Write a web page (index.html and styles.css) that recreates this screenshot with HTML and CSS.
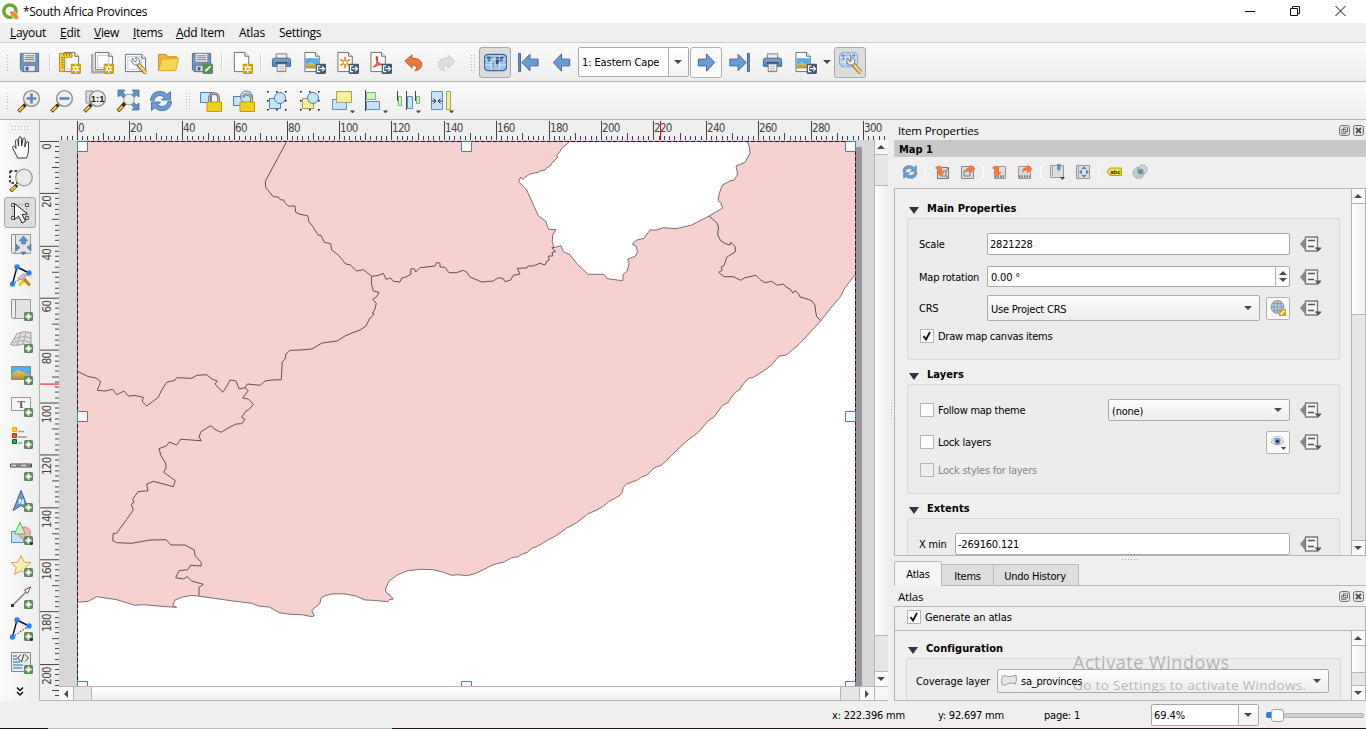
FILE: index.html
```html
<!DOCTYPE html>
<html lang="en">
<head>
<meta charset="utf-8">
<title>*South Africa Provinces</title>
<link rel="stylesheet" href="styles.css">
</head>
<body>
<svg class="defs" width="0" height="0">
  <defs>
    <linearGradient id="blue" x1="0" y1="0" x2="0" y2="1"><stop offset="0" stop-color="#7da5d3"/><stop offset="1" stop-color="#5080b8"/></linearGradient>
    <linearGradient id="sand" x1="0" y1="0" x2="0" y2="1"><stop offset="0" stop-color="#e0cf70"/><stop offset="1" stop-color="#b3912a"/></linearGradient>
  </defs>
  <symbol id="b-plus" viewBox="0 0 9 9"><rect width="9" height="9" rx="1.5" fill="#5a8c5a"/><path d="M4.5 1.5v6M1.5 4.5h6" stroke="#fff" stroke-width="2"/></symbol>
  <symbol id="b-new" viewBox="0 0 11 11"><rect width="11" height="11" rx="1.5" fill="#c7a200"/><path d="M5.5 1v9M1.600 3.200l7.800 4.600M9.400 3.200l-7.800 4.600" stroke="#fff" stroke-width="1.300"/><circle cx="5.500" cy="5.500" r="2.600" fill="#fff"/><circle cx="5.500" cy="5.500" r="1.200" fill="#c7a200"/></symbol>
  <symbol id="b-exp" viewBox="0 0 11 11"><rect width="11" height="11" rx="1.500" fill="#415a70"/><path d="M5 2.500H2.200v6H5M4 5.500h5M7 3l2.500 2.500L7 8" fill="none" stroke="#fff" stroke-width="1.300"/></symbol>
  <symbol id="paper" viewBox="0 0 24 24"><path d="M4.500 1.500h11l4 4v16h-15z" fill="#fff" stroke="#6e6e6e"/><path d="M15.500 1.500v4h4" fill="#eee" stroke="#6e6e6e"/></symbol>
  <symbol id="save" viewBox="0 0 24 24"><path d="M2.500 2.500h19v19h-17l-2-2z" fill="#6b96c8" stroke="#4a6e9c"/><path d="M5.500 2.500h13v9h-13z" fill="#f1f1f1" stroke="#777" stroke-width=".7"/><path d="M7 5h10M7 7h10M7 9h10" stroke="#777"/><path d="M6 15h12v6.500H6z" fill="#e4e4e4" stroke="#555" stroke-width=".7"/><path d="M8 16.500h3v4H8z" fill="#3f6490"/></symbol>
  <symbol id="saveas" viewBox="0 0 24 24"><use href="#save"/><rect x="13" y="13" width="11" height="11" rx="1.500" fill="#5a8c5a"/><path d="M15.500 21.500l.5-2 5-4 1 1-4.500 4.500z" fill="#fff"/></symbol>
  <symbol id="newlay" viewBox="0 0 24 24"><use href="#paper" x="2"/><path d="M8.500 6v13h9M8 4.500h8" fill="none" stroke="#b6c9f0"/><path d="M1.500 2.500h13v4h-8v15h-5z" fill="#fbd43c" stroke="#b98b00"/><path d="M3.500 7h2M3.500 9.500h2M3.500 12h2M3.500 14.500h2M3.500 17h2M6 3v2M9 3v2M12 3v2" stroke="#86620a"/><use href="#b-new" x="13" y="13" width="11" height="11"/></symbol>
  <symbol id="duplay" viewBox="0 0 24 24"><path d="M1 3v19h15" fill="none" stroke="#aaa" stroke-width="3"/><path d="M4.500 1.500h14l4 4v14h-18z" fill="#fff" stroke="#6e6e6e"/><path d="M7 4.500h11v13H7z" fill="none" stroke="#b6c9f0"/><path d="M18.500 1.500v4h4" fill="#eee" stroke="#6e6e6e"/><use href="#b-new" x="13" y="13" width="11" height="11"/></symbol>
  <symbol id="wrench" viewBox="0 0 24 24"><path d="M13 11l9 10" stroke="#806a38" stroke-width="4.500" stroke-linecap="round"/><path d="M15 13l6.800 7.500" stroke="#f7d57a" stroke-width="2.600" stroke-linecap="round"/><path d="M8 5.500a4.500 4.500 0 0 0 5 7l2-1.500a4.500 4.500 0 0 0-4-6.500l1 3.500-1.500 1.500z" fill="#eee" stroke="#777"/></symbol>
  <symbol id="manage" viewBox="0 0 24 24"><path d="M1.500 3.500h17l4 4v14h-21z" fill="#fff" stroke="#6e6e6e"/><path d="M4 6h14v13H4z" fill="none" stroke="#b6c9f0"/><path d="M18.500 3.500v4h4" fill="#eee" stroke="#6e6e6e"/><use href="#wrench" x="1" y="2"/></symbol>
  <symbol id="folder" viewBox="0 0 24 24"><path d="M1.500 20.500v-17h8l2 2.500h9v3" fill="#e5b93c" stroke="#bd8f23"/><path d="M1.500 20.500L5 8.500l17.500-1-3 13z" fill="#fbd550" stroke="#d6a52c"/></symbol>
  <symbol id="newpage" viewBox="0 0 24 24"><use href="#paper" x="-1"/><use href="#b-new" x="12" y="13" width="11" height="11"/></symbol>
  <symbol id="print" viewBox="0 0 24 24"><path d="M6.500 3h11v6h-11z" fill="#eee" stroke="#777"/><path d="M2.500 10q0-2.500 2-2.500h15q2 0 2 2.500v6h-19z" fill="url(#blue)" stroke="#3e6292"/><path d="M6 11.500h12v2H6z" fill="#38516f"/><path d="M7.500 13.500h9v8h-9z" fill="#fff" stroke="#777"/><path d="M9 16h6M9 18h6M9 20h6" stroke="#999" stroke-width=".8"/></symbol>
  <symbol id="expimg" viewBox="0 0 24 24"><use href="#paper" x="-2.500"/><path d="M2.500 7.500h14V18h-14z" fill="#55aef0"/><path d="M2.500 15l5.500-3.500 4 2 4.500-1V18h-14z" fill="url(#sand)"/><use href="#b-exp" x="13" y="13" width="11" height="11"/></symbol>
  <symbol id="expsvg" viewBox="0 0 24 24"><use href="#paper" x="-2.500"/><path d="M9.500 6v12M4.500 8.800l10 6.400M14.500 8.800l-10 6.400" stroke="#f5871f" stroke-width="1.900"/><circle cx="9.500" cy="12" r="1.600" fill="#fff"/><use href="#b-exp" x="13" y="13" width="11" height="11"/></symbol>
  <symbol id="exppdf" viewBox="0 0 24 24"><use href="#paper" x="-2.500"/><path d="M4.500 17c4-2 5-8 4-11-1-1-1.500 2 0 5 2 3 4 3.500 6 3.500 1-1-5-1.500-10 2.500z" fill="none" stroke="#f03a32" stroke-width="1.300"/><use href="#b-exp" x="13" y="13" width="11" height="11"/></symbol>
  <symbol id="undo" viewBox="0 0 24 24"><path d="M3 10.500l7.500-6.500v4c7-1 10 2.500 10 6 0 3.500-3 6.500-7 6.500 2.500-2.500 2.500-6-3-6v3.500z" fill="#e8793d" stroke="#c35b22"/></symbol>
  <symbol id="redo" viewBox="0 0 24 24"><path d="M21 10.500l-7.500-6.500v4c-7-1-10 2.500-10 6 0 3.500 3 6.500 7 6.500-2.500-2.500-2.500-6 3-6v3.500z" fill="#dedede" stroke="#c9c9c9"/></symbol>
  <symbol id="atlas" viewBox="0 0 24 24"><rect x=".5" y="3.500" width="23" height="17" rx="4" fill="#9fc4ec" stroke="#3f6796" stroke-width="1.400"/><path d="M3 6h6l-1 3-3 2-2-3zM8.500 12.500l2 1-1 4zM12.500 6.500l8-.5-1 4-4 1.500-1.500 5-1.500-4z" fill="#2f557f"/><path d="M1 8.500h22M1 14.500h22M7.500 4v16M16 4v16" stroke="#e8f2ff" stroke-width=".7"/></symbol>
  <symbol id="first" viewBox="0 0 24 24"><path d="M1.700 2.500h2v19h-2z" fill="#6b96c8" stroke="#3e6292"/><path d="M5 12L13.500 3.500v5h8.500v7h-8.500v5z" fill="#6b9bd0" stroke="#3e6292"/></symbol>
  <symbol id="prev" viewBox="0 0 24 24"><path d="M3.500 12L12 3v5.500h8.500v7H12V21z" fill="#6b9bd0" stroke="#3e6292"/></symbol>
  <symbol id="next" viewBox="0 0 24 24"><path d="M20.500 12L12 3v5.500H3.500v7H12V21z" fill="#6b9bd0" stroke="#3e6292"/></symbol>
  <symbol id="last" viewBox="0 0 24 24"><path d="M20.300 2.500h2v19h-2z" fill="#6b96c8" stroke="#3e6292"/><path d="M19 12L10.500 3.500v5H2v7h8.500v5z" fill="#6b9bd0" stroke="#3e6292"/></symbol>
  <symbol id="atlasset" viewBox="0 0 24 24"><rect x=".5" y="1.500" width="19" height="15" rx="4" fill="#b5cdec" stroke="#8da7c9"/><path d="M3 4h5l-1 4-3 1zM11 4h6l-2 5-3 2zM7 10l3 1-2 4z" fill="#5f83b3"/><path d="M1 6.500h18M1 11.500h18M6.500 2v14M13 2v14" stroke="#edf4ff"/><use href="#wrench" x="1" y="2"/></symbol>
  <symbol id="lens" viewBox="0 0 24 24"><path d="M8.500 15.500L1.500 22.500" stroke="#3a2c07" stroke-width="3.600"/><path d="M6.500 17.500l-4.500 4.500" stroke="#f5bf3a" stroke-width="2.400"/><circle cx="14.500" cy="9.500" r="7.900" fill="#ededed" stroke="#8c8c8c" stroke-width="1.400"/></symbol>
  <symbol id="zin" viewBox="0 0 24 24"><use href="#lens"/><path d="M14.500 4.500v10M9.500 9.500h10" stroke="#5a87be" stroke-width="2.600"/></symbol>
  <symbol id="zout" viewBox="0 0 24 24"><use href="#lens"/><path d="M9.500 9.500h10" stroke="#5a87be" stroke-width="2.600"/></symbol>
  <symbol id="z11" viewBox="0 0 24 24"><path d="M3 2h7v12H3z" fill="#ddd" stroke="#888"/><use href="#lens"/></symbol>
  <symbol id="zfull" viewBox="0 0 24 24"><path d="M2 1h7L7 3.500l3 3L7.500 9l-3-3L2 8zM23 1h-7l2 2.500-3 3L17.500 9l3-3L23 8zM23 21h-7l2-2.500-3-3 2.500-2.500 3 3L23 14z" fill="#5e8fc8" stroke="#3e6292" stroke-width=".7"/><path d="M9.500 13.500L2 22" stroke="#3a2c07" stroke-width="3.600"/><path d="M6.500 17L2.500 21.500" stroke="#f5bf3a" stroke-width="2.400"/><circle cx="13" cy="10.500" r="5.300" fill="#eee" stroke="#999"/></symbol>
  <symbol id="refresh" viewBox="0 0 24 24"><path d="M1.500 11.500C2 5 6 2.500 11 2.500c3.500 0 5.500 1 7 3L21.500 2.500v8.500h-9l3-3C11 5.500 7 6 5 11.500z" fill="#6b9bd0" stroke="#4d7cb5"/><path d="M22.500 12.500C22 19 18 21.500 13 21.500c-3.500 0-5.500-1-7-3L2.500 21.500V13h9l-3 3c4.500 2.500 8.500 2 10.500-3.500z" fill="#6b9bd0" stroke="#4d7cb5"/></symbol>
  <symbol id="lock" viewBox="0 0 24 24"><path d="M1.500 3.500h11v10h-11z" fill="#c7e3f8" stroke="#4e7fb5"/><path d="M10.500 13V9a4.500 4.500 0 0 1 9 0V13" fill="none" stroke="#777" stroke-width="2.800"/><path d="M10.500 13V9a4.500 4.500 0 0 1 9 0V13" fill="none" stroke="#bbb" stroke-width="1"/><path d="M8 13h14.500v9.500H8z" fill="#f0d01f" stroke="#c09a00"/></symbol>
  <symbol id="unlock" viewBox="0 0 24 24"><path d="M1.500 7.500h11v9h-11z" fill="#c7e3f8" stroke="#4e7fb5"/><circle cx="14.500" cy="8" r="6" fill="#c7e3f8" stroke="#4e7fb5"/><path d="M11 8.500q1-3 4-3 4.500.5 4.500 5V13" fill="none" stroke="#777" stroke-width="2.600"/><path d="M11 8.500q1-3 4-3 4.500.5 4.500 5V13" fill="none" stroke="#ccc" stroke-width="1"/><path d="M8 13h14.500v9.500H8z" fill="#f0d01f" stroke="#c09a00"/></symbol>
  <symbol id="dots" viewBox="0 0 24 24"><path d="M2 2h1.600v1.600H2zM11 2h1.600v1.600h-1.600zM20 2h1.600v1.600h-1.600zM2 20h1.600v1.600H2zM11 20h1.600v1.600h-1.600zM20 20h1.600v1.600h-1.600zM20 11h1.600v1.600h-1.600zM2 11h1.600v1.600H2z" fill="#111"/></symbol>
  <symbol id="group" viewBox="0 0 24 24"><path d="M4.500 9.500h11v10h-11z" fill="#c7e3f8" stroke="#4e7fb5"/><circle cx="15" cy="9" r="5.500" fill="#c7e3f8" stroke="#4e7fb5"/><use href="#dots"/></symbol>
  <symbol id="ungroup" viewBox="0 0 24 24"><path d="M4.500 9.500h11v10h-11z" fill="#f3ee9c" stroke="#a09a4c"/><circle cx="15" cy="9" r="5.500" fill="#c7e3f8" stroke="#4e7fb5"/><use href="#dots"/></symbol>
  <symbol id="raise" viewBox="0 0 24 24"><path d="M1.500 10.500h14v10h-14z" fill="#c7e3f8" stroke="#5a8fc4"/><path d="M5.500 2.500h15v11h-15z" fill="#f3ee9c" stroke="#a7a256"/><path d="M19 21.500h5l-2.500 3z" fill="#444"/></symbol>
  <symbol id="align" viewBox="0 0 24 24"><path d="M1.500 1v21" stroke="#444"/><path d="M2.500 3.500h9v7h-9z" fill="#c8f7c4" stroke="#77b877"/><path d="M2.500 12.500h13v8h-13z" fill="#c7e3f8" stroke="#5a8fc4"/><path d="M19 21.500h5l-2.500 3z" fill="#444"/></symbol>
  <symbol id="distrib" viewBox="0 0 24 24"><path d="M.5 2v10M9.500 2v19M18.500 2v10" stroke="#444"/><path d="M1.500 7.500h3v9h-3zM19.500 7.500h3v7h-3z" fill="#c8f7c4" stroke="#77b877"/><path d="M10.500 7.500h5v12h-5z" fill="#c7e3f8" stroke="#5a8fc4"/><path d="M19 21.500h5l-2.500 3z" fill="#444"/></symbol>
  <symbol id="resize" viewBox="0 0 24 24"><path d="M1.500 2.500h11v18h-11z" fill="#c7e3f8" stroke="#5a8fc4"/><path d="M16.500 2.500h4v18h-4z" fill="#f3ee9c" stroke="#a7a256"/><path d="M1.500 12h4M3.500 9.500L6 12 3.500 14.500M12.500 12h-4M10.500 9.500L8 12l2.500 2.500" fill="none" stroke="#333"/><path d="M19 21.500h5l-2.500 3z" fill="#444"/></symbol>
  <symbol id="hand" viewBox="0 0 24 24"><path d="M8.500 22C8 19 4.500 15 3.500 11.500c0-2 2.500-1.500 3.500 1L6.500 5c.2-2 2.500-1.500 2.500 0l.5 5L9.700 2c.3-1.700 2.500-1.500 2.600 0l.3 8L14 3c.5-1.500 2.500-1 2.300.7L15.700 11l1.800-5c.8-1.300 2.500-.5 2.200 1-.7 5 .8 9-2.200 15z" fill="#fff" stroke="#333"/></symbol>
  <symbol id="zoombox" viewBox="0 0 24 24"><path d="M1 3h14M1 3v12h12" fill="none" stroke="#111" stroke-width="1.500" stroke-dasharray="2.500 2"/><path d="M8 17l-6.500 6" stroke="#3a2c07" stroke-width="3.600"/><path d="M6.500 18.500L2 22.500" stroke="#f5bf3a" stroke-width="2.400"/><circle cx="15" cy="9.500" r="8.300" fill="#e9e9e9" fill-opacity=".9" stroke="#999" stroke-width="1.300"/></symbol>
  <symbol id="select" viewBox="0 0 24 24"><path d="M3.500 3.500h14v14h-14z" fill="none" stroke="#777" stroke-dasharray="1 2"/><path d="M2.500 2.500h3v3h-3zM16.500 2.500h3v3h-3zM2.500 15.500h3v3h-3zM16.500 15.500h3v3h-3z" fill="#ddd" stroke="#555"/><path d="M5.500 2.500v16l4-3.500 3.500 7 3.500-2-3.500-6.500 5.500-.5z" fill="#fff" stroke="#222"/></symbol>
  <symbol id="scroll" viewBox="0 0 24 24"><path d="M4.500 2.500h17v19h-17z" fill="#e2e2e2" stroke="#999"/><path d="M2.500 2.500h4v16q0 3-2 3t-2-2z" fill="#eee" stroke="#8e8e8e"/></symbol>
  <symbol id="movecont" viewBox="0 0 24 24"><use href="#scroll"/><path d="M14.500 4l4.500 5h-2.500v3h-4V9H10zM7 12l4 3.500L7 19zM22 12l-4 3.500 4 3.500zM12 20h5l-2.500 3z" fill="#5e8fc8" stroke="#3e6292" stroke-width=".5"/></symbol>
  <symbol id="nodes" viewBox="0 0 24 24"><path d="M8 3L3.500 20M8 3l12 6" stroke="#111" stroke-width="1.400"/><path d="M3.500 20L20 9" stroke="#111" stroke-dasharray="1.500 1.500"/><circle cx="8" cy="3" r="2.700" fill="#2a80ff"/><circle cx="20" cy="9" r="2.700" fill="#2a80ff"/><circle cx="3.500" cy="20" r="2.700" fill="#2a80ff"/></symbol>
  <symbol id="editnodes" viewBox="0 0 24 24"><use href="#nodes"/><path d="M10 21.500l7-7" stroke="#edc528" stroke-width="3.400"/><path d="M15 15l6 6.500" stroke="#c78312" stroke-width="3"/><path d="M9 14.500l5-4.500 6 .5-3 1.500-5 4z" fill="#ccc" stroke="#888" stroke-width=".8"/></symbol>
  <symbol id="addmap" viewBox="0 0 24 24"><use href="#scroll"/><use href="#b-plus" x="15" y="15" width="9" height="9"/></symbol>
  <symbol id="add3d" viewBox="0 0 24 24"><path d="M1.500 15.500L8 4.500q7-3 14-1v15q-7-5-12-2.500-5 1-8.500-.5z" fill="#e0e0e0" stroke="#999"/><path d="M5 10q8-4 17-1M8 16L12 4M14 15l3-12M4 14q9-5 18 0" fill="none" stroke="#aaa"/><use href="#b-plus" x="15" y="15" width="9" height="9"/></symbol>
  <symbol id="addpic" viewBox="0 0 24 24"><path d="M2.500 5.500h19v13h-19z" fill="#55aef0" stroke="#888"/><path d="M3 13l6-4 12 5v4H3z" fill="url(#sand)"/><use href="#b-plus" x="15" y="15" width="9" height="9"/></symbol>
  <symbol id="addlabel" viewBox="0 0 24 24"><path d="M2.500 4.500h19v13h-19z" fill="#f7f7f7" stroke="#999"/><use href="#b-plus" x="15" y="15" width="9" height="9"/></symbol>
  <symbol id="addlegend" viewBox="0 0 24 24"><path d="M3.500 2.500h4v4h-4z" fill="#ffd21a" stroke="#ff9a00"/><path d="M3.500 8.500h4v4h-4z" fill="#ff5a1a" stroke="#c83200"/><path d="M3.500 14.500h4v4h-4z" fill="#10b858" stroke="#06602c"/><path d="M9 6.500h6M9 12h9M9 18h4" stroke="#999" stroke-width="1.600"/><use href="#b-plus" x="15" y="15" width="9" height="9"/></symbol>
  <symbol id="addscale" viewBox="0 0 24 24"><path d="M1.500 7h21v3h-21z" fill="#ddd" stroke="#444"/><path d="M7 8.500h5M17 8.500h5" stroke="#777" stroke-width="2"/><use href="#b-plus" x="15" y="15" width="9" height="9"/></symbol>
  <symbol id="addnorth" viewBox="0 0 24 24"><path d="M12 1.500l8 20-8-5-8 5z" fill="#6b9bd0" stroke="#3e6292"/></symbol>
  <symbol id="addshape" viewBox="0 0 24 24"><path d="M2.500 10.500h12v11h-12z" fill="#c7e3f8" stroke="#5a8fc4"/><circle cx="15.500" cy="12" r="6" fill="#f9b1b1" stroke="#e07a7a"/><path d="M11 1.500l5.500 11.500h-11z" fill="#c8f7c4" stroke="#66a866"/><use href="#b-plus" x="15" y="15" width="9" height="9"/><path d="M20 21.500h5l-2.500 3z" fill="#222"/></symbol>
  <symbol id="addstar" viewBox="0 0 24 24"><path d="M12 2.500l3 6.500 7 .7-5.300 4.700 1.600 7L12 17.700 5.700 21.400l1.600-7L2 9.700 9 9z" fill="#fdeeb0" stroke="#d5a05a"/><use href="#b-plus" x="15" y="15" width="9" height="9"/></symbol>
  <symbol id="addarrow" viewBox="0 0 24 24"><path d="M4 20L18 6" stroke="#777" stroke-width="1.300"/><path d="M21.500 2l-6 3L18.500 8.500z" fill="#fff" stroke="#555"/><path d="M2 19h3v3H2z" fill="#333"/><use href="#b-plus" x="15" y="15" width="9" height="9"/></symbol>
  <symbol id="addnode" viewBox="0 0 24 24"><use href="#nodes"/><use href="#b-plus" x="15" y="15" width="9" height="9"/><path d="M20 21.500h5l-2.500 3z" fill="#222"/></symbol>
  <symbol id="addhtml" viewBox="0 0 24 24"><path d="M2.500 2.500h19v19h-19z" fill="#ececec" stroke="#888"/><path d="M4 6h4M4 9h4M4 12h7M4 15h10M4 18h9" stroke="#5e8fc8" stroke-width="1.600"/><path d="M12 4.500L8.500 8l3.500 3.500M16 4.500L19.500 8 16 11.500M15 4l-2.500 8" fill="none" stroke="#333"/><use href="#b-plus" x="15" y="15" width="9" height="9"/></symbol>
  <symbol id="dd" viewBox="0 0 21 16"><path d="M0 8l5-6v12z" fill="#888"/><path d="M5.500 1h12v14h-12z" fill="#f6f6f6" stroke="#7c7c7c" stroke-width="1.300"/><path d="M8 4.500h7M8 10.500h6" stroke="#555" stroke-width="1.400"/><path d="M14.500 11.500H22l-3.700 4z" fill="#555"/></symbol>
  <symbol id="pfloat" viewBox="0 0 11 11"><rect x=".6" y=".6" width="9.800" height="9.800" rx="2" fill="#eee" stroke="#666"/><path d="M4.500 2.800h4v4h-4zM2.800 4.500h4v4h-4z" fill="#eee" stroke="#666" stroke-width=".9"/></symbol>
  <symbol id="pclose" viewBox="0 0 11 11"><rect x=".6" y=".6" width="9.800" height="9.800" rx="2" fill="#eee" stroke="#666"/><path d="M3 3l5 5M8 3l-5 5" stroke="#555" stroke-width="2"/></symbol>
  <symbol id="setext" viewBox="0 0 16 16"><path d="M3.500 3.500h11v11h-11z" fill="#ddd" stroke="#777"/><path d="M7 7h5v5H7zM14 4l-2 3M14 14l-2-2" fill="none" stroke="#777"/><path d="M1 4q3-4 7-1v5h3l-4.500 4.500L2 8h2.500q-1-3-3.500-4z" fill="#ee7a3b"/></symbol>
  <symbol id="viewext" viewBox="0 0 16 16"><path d="M1.500 2.500h12v12h-12z" fill="#ddd" stroke="#888"/><path d="M4 7h6v5H4z" fill="none" stroke="#777"/><path d="M5 9q0-6 5-6V.500l5.500 4.500L10 9.500V6.500Q7 6 5 9z" fill="#ee7a3b"/></symbol>
  <symbol id="setsc" viewBox="0 0 16 16"><path d="M3.500 2.500h11v12h-11z" fill="#ddd" stroke="#999"/><path d="M4 12.500h10" stroke="#777" stroke-width="2.500" stroke-dasharray="1.500 1"/><path d="M1 4q3-4 7-1v5h3l-4.500 4.500L2 8h2.500q-1-3-3.500-4z" fill="#ee7a3b"/></symbol>
  <symbol id="viewsc" viewBox="0 0 16 16"><path d="M1.500 2.500h12v12h-12z" fill="#ddd" stroke="#999"/><path d="M2 12.500h11" stroke="#777" stroke-width="2.500" stroke-dasharray="1.500 1"/><path d="M5 9q0-6 5-6V.500l5.500 4.500L10 9.500V6.500Q7 6 5 9z" fill="#ee7a3b"/></symbol>
  <symbol id="bookmark" viewBox="0 0 16 16"><path d="M1.500 1.500h13v12h-13z" fill="#ddd" stroke="#999"/><path d="M3.500 2v10" stroke="#aaa"/><path d="M8 0h3.500v5L9.800 7 8 5z" fill="#5e8fc8"/><path d="M11 13h5l-2.500 3z" fill="#444"/></symbol>
  <symbol id="interact" viewBox="0 0 16 16"><path d="M1.500 1.500h13v13h-13z" fill="#ddd" stroke="#999"/><path d="M3.500 2v12" stroke="#aaa"/><path d="M9 2l2.500 3h-5zM9 14l2.500-3h-5zM4 8l3-2.500v5zM14 8l-3-2.500v5z" fill="#4f80bb"/></symbol>
  <symbol id="labels" viewBox="0 0 16 16"><path d="M4 4h11.500v7.500H4L1 7.800z" fill="#fbe04a" stroke="#c2a000"/></symbol>
  <symbol id="clip" viewBox="0 0 16 16"><circle cx="6.500" cy="9" r="5.500" fill="#b9d0b9" stroke="#7da07d" stroke-dasharray="1.500 1"/><circle cx="10.500" cy="5.500" r="4.500" fill="#ccc" fill-opacity=".8" stroke="#888" stroke-dasharray="1.500 1"/><circle cx="8.500" cy="7.500" r="2.800" fill="#6d8fb4"/></symbol>
  <symbol id="globe" viewBox="0 0 16 16"><circle cx="7.500" cy="7" r="6.500" fill="#a9cbe8" stroke="#999"/><path d="M1 7h13M7.500.5v13M2.500 3.500h10M2.500 10.500h10M5 1q-3 6 0 12M10 1q3 6 0 12" fill="none" stroke="#7d8c9a" stroke-width=".7"/><path d="M9 9h7v7H9z" fill="#d0a800"/><path d="M10.500 14.500l4-4" stroke="#fff" stroke-width="1.500"/></symbol>
  <symbol id="eye" viewBox="0 0 16 16"><path d="M1 8q6-8 13 0-6 6-13 0z" fill="#fff" stroke="#aaa"/><path d="M1 6q6-7 13-1" fill="none" stroke="#bbb"/><circle cx="7.500" cy="7.300" r="3.200" fill="#6d97c8"/><circle cx="7.500" cy="7.300" r="1.400" fill="#123"/><path d="M11 13h5l-2.500 3z" fill="#444"/></symbol>
</svg>

<div class="window">
  <header class="titlebar">
    <svg class="logo" viewBox="0 0 16 16"><circle cx="7.500" cy="7.700" r="5.800" fill="none" stroke="#6aa632" stroke-width="3.200"/><path d="M7.500 7.500h3.500l4.500 4.700v3.300h-3l-5-4.700z" fill="#e98a35" stroke="#fff" stroke-width=".6"/></svg>
    <span class="title">*South Africa Provinces</span>
    <svg class="winbtns" viewBox="0 0 120 23"><path d="M0 11.500h10" stroke="#111"/><path d="M45.500 8.500h7v7h-7zM47.500 8V6.500h7v7H53" fill="none" stroke="#111"/><path d="M90.500 6l10 10M100.500 6l-10 10" stroke="#111"/></svg>
  </header>
  <nav class="menubar">
    <span class="m1"><u>L</u>ayout</span><span class="m2"><u>E</u>dit</span><span class="m3"><u>V</u>iew</span><span class="m4"><u>I</u>tems</span><span class="m5"><u>A</u>dd Item</span><span class="m6">Atlas</span><span class="m7">Settings</span>
  </nav>
  <div class="toolbar">
    <i class="grip first"></i>
    <b class="tool"><svg><use href="#save"/></svg></b><i class="sep"></i>
    <b class="tool"><svg><use href="#newlay"/></svg></b><b class="tool"><svg><use href="#duplay"/></svg></b><b class="tool"><svg><use href="#manage"/></svg></b><b class="tool"><svg><use href="#folder"/></svg></b><b class="tool"><svg><use href="#saveas"/></svg></b><i class="sep"></i>
    <b class="tool"><svg><use href="#newpage"/></svg></b><i class="sep narrow"></i>
    <b class="tool"><svg><use href="#print"/></svg></b><b class="tool"><svg><use href="#expimg"/></svg></b><b class="tool"><svg><use href="#expsvg"/></svg></b><b class="tool"><svg><use href="#exppdf"/></svg></b><b class="tool"><svg><use href="#undo"/></svg></b><b class="tool"><svg><use href="#redo"/></svg></b>
    <i class="grip last"></i>
    <b class="tool on"><svg><use href="#atlas"/></svg></b><b class="tool"><svg><use href="#first"/></svg></b><b class="tool"><svg><use href="#prev"/></svg></b>
    <span class="pagecombo"><span>1: Eastern Cape</span><em><i class="tri"></i></em></span>
    <b class="tool raised"><svg><use href="#next"/></svg></b><b class="tool"><svg><use href="#last"/></svg></b><b class="tool"><svg><use href="#print"/></svg></b><b class="tool"><svg><use href="#expimg"/></svg></b><span class="menuarrow"><i class="tri"></i></span><b class="tool on"><svg><use href="#atlasset"/></svg></b>
  </div>
  <div class="toolbar second">
    <i class="grip first"></i>
    <b class="tool"><svg><use href="#zin"/></svg></b><b class="tool"><svg><use href="#zout"/></svg></b><b class="tool"><svg viewBox="0 0 24 24"><use href="#z11"/><text x="14.700" y="13" font-size="9.500" text-anchor="middle" class="bold-glyph">1:1</text></svg></b><b class="tool"><svg><use href="#zfull"/></svg></b><b class="tool"><svg><use href="#refresh"/></svg></b>
    <i class="grip"></i>
    <b class="tool"><svg><use href="#lock"/></svg></b><b class="tool"><svg><use href="#unlock"/></svg></b><b class="tool"><svg><use href="#group"/></svg></b><b class="tool"><svg><use href="#ungroup"/></svg></b><b class="tool"><svg><use href="#raise"/></svg></b><b class="tool"><svg><use href="#align"/></svg></b><b class="tool"><svg><use href="#distrib"/></svg></b><b class="tool"><svg><use href="#resize"/></svg></b>
  </div>

  <main class="body">
    <aside class="toolbox">
      <i class="hgrip"></i>
      <b><svg><use href="#hand"/></svg></b><b><svg><use href="#zoombox"/></svg></b><b class="on"><svg><use href="#select"/></svg></b><b><svg><use href="#movecont"/></svg></b><b><svg><use href="#editnodes"/></svg></b><b><svg><use href="#addmap"/></svg></b><b><svg><use href="#add3d"/></svg></b><b><svg><use href="#addpic"/></svg></b><b><svg viewBox="0 0 24 24"><use href="#addlabel"/><text x="12" y="15" font-size="11" text-anchor="middle" class="serif-glyph">T</text></svg></b><b><svg><use href="#addlegend"/></svg></b><b><svg><use href="#addscale"/></svg></b><b><svg viewBox="0 0 24 24"><use href="#addnorth"/><text x="12" y="15" font-size="8" text-anchor="middle" class="white-glyph">N</text><use href="#b-plus" x="15" y="14" width="9" height="9"/></svg></b><b><svg><use href="#addshape"/></svg></b><b><svg><use href="#addstar"/></svg></b><b><svg><use href="#addarrow"/></svg></b><b><svg><use href="#addnode"/></svg></b><b><svg><use href="#addhtml"/></svg></b>
      <svg class="more" viewBox="0 0 8 9"><path d="M1 .5l3 3 3-3M1 5l3 3 3-3" fill="none" stroke="#111" stroke-width="1.500"/></svg>
    </aside>

    <section class="layout">
      <svg class="ruler-h" id="rulerH" viewBox="40 120 848 20"></svg>
      <svg class="ruler-v" id="rulerV" viewBox="40 140 19 561"></svg>
      <svg class="view" viewBox="59 140 815 546">
        <rect x="59" y="140" width="815" height="546" fill="#d7d7d7"/>
        <path d="M856 147h6v539h-6z" fill="#979797"/>
        <path d="M77.500 141.500H856V686H77.500z" fill="#fff"/>
        <path class="land" d="M77.500 141.500H855.500V274.300L845 287.700 840 297.300 831.700 307 820.700 320.700 811.700 330.700 800 343.300 787 354.500 784 355.500 780 355.800 778 357 771.700 365 763.300 371 753.300 377.300 748.300 378.300 746 381 741.700 386 740 389.300 734.300 393.300 727.700 402.700 722.700 405.300 713.300 417.700 709 420 698.300 432.300 686.700 441 674 453 661.700 465 654 468 646.700 475.300 641.700 477 637.300 480 626.700 484 623.300 487.300 622.300 492.300 619.300 495.700 608.300 502 603.300 506.300 596.700 510 587.700 514 576.700 522.700 566.700 528 556.700 535.300 546.700 540.700 536.700 546.700 532.300 548 527.300 552.300 521.700 554.300 518.300 556.700 511.700 557.700 504.300 562 493.300 564.700 483.300 569.700 475 573.700 466.700 575.700 458.300 574.700 451.700 575.300 443.300 572.300 433.300 569.700 420 569.300 406.700 571 396.700 575.300 389 581.300 385.700 588.300 385.700 592 390 595.300 393.300 599 389.300 599.700 387.700 601.700 373.300 600.300 365 600 355 595.700 343.300 593.700 331.700 594 325 595.700 321 598 320 603.300 311.700 610.300 314.300 615.700 312 616.700 301.700 614.700 290 614.300 279.300 612.700 269.300 607 260 606.300 251.700 603.300 233.300 601 200 596.300 191.700 595.300 181.700 597.300 175 600 172.700 606 176.700 607.300 166.700 606.700 143.300 604.700 135 605.300 116.700 599.700 96.700 596.700 88.300 601.300 77.500 602.300z"/>
        <path class="hole" d="M570 141.500L561.700 148.300 559.300 152.700 556.700 155 557.500 157.500 551.700 163.300 550.500 166 546.700 167.700 545 170.300 541 170.500 538.300 172.300 530 174 525 177.300 523 179.500 520.700 177 518.700 181.700 526.700 190 538.300 215.700 545.700 221.300 548.700 229.300 556 229.700 552.700 235 552.300 241.700 554 247.700 561 245.700 563.300 251.700 570 254.700 577.300 264.300 588.300 274.300 604 274.300 607.300 278.700 622.700 280.700 623.300 274.300 627.300 271 629 263.300 627.700 259.300 635 256.300 637.700 251.700 636 246 632.300 244.300 636 240.300 644 238.300 650 230 656.700 230 663.300 227.700 676 228.700 691.700 225 709 216 722.700 208 720.700 202.700 718 200.700 719.300 193.300 722.300 185 730 181 734.300 180 737.700 174 736 166 745 162.300 750 153.300 749.300 146.700 747.300 141.500z"/>
        <path class="border" d="M709 216L716.700 222.700 718.500 227 717.700 235 720.700 240.700 725 243.500 730 245 730.700 242.300 735.300 246.700 735.300 251.700 726.700 257.300 724 265.700 721 267 722.500 270 718.700 272.300 724 276.700 733.300 276.700 740.700 280.300 745 277.700 756 275.300 760 279.500 765 282.700 771.700 281.300 777.300 285.300 783.300 284 786 287 790 289 793 293 795 290.500 798.300 293.300 800 297 805 298.300 811.700 300.700 815 305.300 815.500 311 816.700 316.700 820.700 320.700"/>
        <path class="border" d="M286.700 141.500L265.300 181.300 265.700 187.300 269 191.500 273.300 196.700 278.300 197 280.700 200 283.300 199.700 285.500 203.500 288.300 206 295 206 295.700 212.300 300 214.300 307.700 215.700 309 221.700 313.300 227.300 318.300 235.300 321 235.300 324.300 242.300 330.700 243.700 331.700 250 338.300 255 345.700 264 350 264.700 356.700 271 363.300 269.700 371.700 276.300 378 275.500 383.300 273.300 386 279.300 390.700 278 393.300 281.300 400 282 401.700 278 406 277 411 274 410.700 269 414.300 268.700 415.700 272 420 267.700 435 266 436.700 262.300 440 263.300 440 267 445 267.300 449 272.700 456.700 272.700 463.300 270.300 467 272.300 470 277 481.700 282 493.300 281 498.300 277.700 503 278.500 505 281.700 510.700 280 513.300 275.300 520 274 517.300 268.300 526.700 268 528 266 533 266 540 263.300 545 265 547 261 549.300 260 548.300 256 552.700 256 552 252.300 555.700 251.700 551.700 247.700 554 247.700"/>
        <path class="border" d="M371.700 276.300L371.300 283.300 373.300 291 379 292.300 376.500 297 372.700 299.300 376.300 303.300 375 309 372.300 313.300 374.300 314 369.300 319 366 326 360 330 352 333 345 336 337 341 322 343 312 349 300 350 290 350.300 286 354 285 359.300 282.300 361.700 281.300 379.700 272 380 265 381 260 385.300 247.300 384 245 387.700 239.300 389 235.700 380.700 230 380 227 386 222.700 392.300 215 384 217.300 381 212 379 206.700 374.700 196.700 375.300 191.700 378.300 176.700 377.700 175 380.300 166.700 382.300 161.700 390 158.300 397.300 146.700 406 142.300 401.700 143.300 397.300 135 395.500 128.300 396 124 391 116.700 394.700 112.700 389.300 105 391 97.300 390.300 100.700 381.700 96 378 88 376.500 77.500 371.300"/>
        <path class="border" d="M245 387.700L248.300 390.700 242.700 398 248.300 399 253.300 404.300 249.300 409.300 246 411 241.700 417.300 245 419.300 241.700 423.700 236 424 230 427 221 432.300 216 430 210.700 425.700 201 431.700 199 437 201.300 440.700 180.700 439.300 176.700 445 169.300 442 166.700 445.700 159 448.700 161 455.700 165.700 463.300 166 468 163.700 472.300 169 476 175.300 480.700 173.300 486.700 153.300 481.300 146.700 484.300 148 490.700 138 491.700 132.700 499.300 134 502.300 131.300 504.300 133.300 510 126.700 519.300 116.700 533.300 113.300 533.300 112.700 540.700 116.700 542.700 131.700 543.300 150 540 166 539.700 171 545 185 545 194.300 550 195 555.700 201.300 562.300 201 566 190.700 565.300 187.700 569.700 179 570.700 175.700 577.700 183.300 579 187.300 576.700 191.700 581 203.300 584.300 199 587.300 199 595.700"/>
        <path d="M77.500 686V141.500H855.500V686" fill="none" stroke="#3f8fb8"/>
        <path d="M77.500 686V141.500H855.500V686" fill="none" stroke="#560028" stroke-dasharray="4 2"/>
        <path class="handle" d="M77.500 141.500h10v10h-10zM461.500 141.500h10v10h-10zM845.500 141.500h10v10h-10zM77.500 411.500h10v10h-10zM845.500 411.500h10v10h-10zM77.500 681.500h10v10h-10zM461.500 681.500h10v10h-10zM845.500 681.500h10v10h-10z"/>
      </svg>
      <div class="vbar"><i class="btn"><i class="tri up"></i></i><i class="groove g1"></i><i class="thumb"></i><i class="groove g2"></i><i class="btn"><i class="tri"></i></i></div>
      <div class="hbar"><i class="btn"><i class="tri left"></i></i><i class="groove h1"></i><i class="thumb"></i><i class="groove h2"></i><i class="btn"><i class="tri right"></i></i></div>
      <div class="corner"></div>
    </section>

    <div class="splitter"><i class="vdots"></i></div>

    <aside class="panel">
      <div class="docktitle"><span>Item Properties</span><svg class="pb"><use href="#pfloat"/></svg><svg class="pb"><use href="#pclose"/></svg></div>
      <div class="itemname">Map 1</div>
      <div class="itemtools">
        <svg><use href="#refresh"/></svg><i></i><svg><use href="#setext"/></svg><svg class="gap"><use href="#viewext"/></svg><i></i><svg><use href="#setsc"/></svg><svg class="gap"><use href="#viewsc"/></svg><i></i><svg><use href="#bookmark"/></svg><svg class="gap near"><use href="#interact"/></svg><i></i><svg viewBox="0 0 16 16"><use href="#labels"/><text x="9.300" y="10" font-size="6" text-anchor="middle" class="bold-glyph">abc</text></svg><svg class="gap near"><use href="#clip"/></svg>
      </div>
      <div class="scrollbox props">
        <div class="content">
          <h3><i class="fold"></i>Main Properties</h3>
          <div class="group main">
            <div class="row r-scale"><label>Scale</label><span class="input">2821228</span><svg class="dd"><use href="#dd"/></svg></div>
            <div class="row r-rot"><label>Map rotation</label><span class="input spin"><span>0.00 °</span><em><i class="tri up"></i><i class="tri"></i></em></span><svg class="dd"><use href="#dd"/></svg></div>
            <div class="row r-crs"><label>CRS</label><span class="combo">Use Project CRS<i class="tri"></i></span><span class="sqbtn"><svg><use href="#globe"/></svg></span><svg class="dd"><use href="#dd"/></svg></div>
            <div class="row r-draw"><i class="check"><svg viewBox="0 0 12 12"><path d="M2.500 6l2.500 3.500 4-7.500" fill="none" stroke="#111" stroke-width="1.800"/></svg></i><span>Draw map canvas items</span></div>
          </div>
          <h3><i class="fold"></i>Layers</h3>
          <div class="group layers">
            <div class="row r-theme"><i class="check"></i><span class="grow">Follow map theme</span><span class="combo theme">(none)<i class="tri"></i></span><svg class="dd"><use href="#dd"/></svg></div>
            <div class="row r-lock"><i class="check"></i><span class="grow">Lock layers</span><span class="sqbtn"><svg><use href="#eye"/></svg></span><svg class="dd"><use href="#dd"/></svg></div>
            <div class="row r-styles"><i class="check off"></i><span class="dim">Lock styles for layers</span></div>
          </div>
          <h3><i class="fold"></i>Extents</h3>
          <div class="group extents">
            <div class="row r-xmin"><label>X min</label><span class="input">-269160.121</span><svg class="dd"><use href="#dd"/></svg></div>
          </div>
        </div>
        <div class="sbar"><i class="btn"><i class="tri up"></i></i><i class="thumb t1"></i><i class="groove"></i><i class="btn"><i class="tri"></i></i></div>
      </div>
      <div class="hsplit"><i class="hdots"></i></div>
      <div class="tabs"><span class="active">Atlas</span><span class="t-items">Items</span><span class="t-undo">Undo History</span></div>
      <div class="docktitle atlas"><span>Atlas</span><svg class="pb"><use href="#pfloat"/></svg><svg class="pb"><use href="#pclose"/></svg></div>
      <div class="generate"><i class="check"><svg viewBox="0 0 12 12"><path d="M2.500 6l2.500 3.500 4-7.500" fill="none" stroke="#111" stroke-width="1.800"/></svg></i><span>Generate an atlas</span></div>
      <div class="scrollbox config">
        <div class="content">
          <h3><i class="fold"></i>Configuration</h3>
          <div class="group cover"><div class="row"><label>Coverage layer</label><span class="combo"><svg class="poly" viewBox="0 0 16 13"><path d="M1 10.500Q-.5 1 4 1.500q4 2.500 11-.5 1 5-.5 9-5-2.500-8 0-3 2.500-5.500.5z" fill="#e6e6e6" stroke="#999"/></svg>sa_provinces<i class="tri"></i></span></div></div>
        </div>
        <div class="sbar"><i class="btn"><i class="tri up"></i></i><i class="thumb t2"></i><i class="groove"></i><i class="btn"><i class="tri"></i></i></div>
      </div>
    </aside>
  </main>

  <footer class="status">
    <span class="s-x">x: 222.396 mm</span><span class="s-y">y: 92.697 mm</span><span class="s-p">page: 1</span>
    <span class="pagecombo zoom"><span>69.4%</span><em><i class="tri"></i></em></span>
    <span class="slider"><i class="fill"></i><i class="knob"></i><i class="track"></i></span>
  </footer>
  <div class="edge"></div>
  <div class="watermark"><p class="w1">Activate Windows</p><p class="w2">Go to Settings to activate Windows.</p></div>
</div>
<script src="rulers.js"></script>
</body>
</html>
```
FILE: styles.css
```css
* { box-sizing: border-box; }
body { margin: 0; width: 1366px; height: 729px; overflow: hidden; background: #efefef; color: #000; font: 11px/14px "DejaVu Sans Condensed", "DejaVu Sans", sans-serif; font-stretch: condensed; letter-spacing: -0.22px; }
i, em, b { font-style: normal; font-weight: normal; }
svg { display: block; flex: none; overflow: visible; }
.defs { position: absolute; }
.bold-glyph { font-family: "Liberation Sans", sans-serif; font-weight: bold; fill: #222; letter-spacing: 0; }
.serif-glyph { font-family: "Liberation Serif", serif; font-weight: bold; fill: #555; }
.white-glyph { font-family: "Liberation Sans", sans-serif; font-weight: bold; fill: #fff; }
.window { position: relative; width: 1366px; height: 729px; display: flex; flex-direction: column; }

.titlebar { height: 23px; background: #fff; display: flex; align-items: center; padding-left: 2px; flex: none; }
.logo { width: 17px; height: 17px; }
.title { margin-left: 4px; flex: 1; font: 12px/16px "Open Sans", sans-serif; letter-spacing: -0.32px; }
.winbtns { width: 120px; height: 23px; margin-right: 1px; }
.menubar { height: 20px; flex: none; border-bottom: 1px solid #d0d0d0; display: flex; align-items: center; padding-left: 10px; font: 12px/16px "Open Sans", sans-serif; letter-spacing: -0.28px; white-space: nowrap; }
.m1 { width: 50px; } .m2 { width: 34px; } .m3 { width: 39px; } .m4 { width: 43px; } .m5 { width: 63px; } .m6 { width: 40px; }

.toolbar { height: 39px; flex: none; border-bottom: 1px solid #b5b5b5; background: linear-gradient(#fafafa, #eeeeee); display: flex; align-items: center; }
.toolbar.second { height: 38px; }
.grip { width: 16px; height: 17px; flex: none; background: radial-gradient(circle, #b8b8b8 0.7px, transparent 0.9px) 7px 0 / 3px 3px; border-left: 7px solid transparent; border-right: 4px solid transparent; background-clip: padding-box; }
.grip.first { width: 12px; border-left-width: 5px; border-right-width: 2px; }
.grip.last { width: 17px; }
.sep { width: 8px; height: 18px; flex: none; background: linear-gradient(90deg, #d2d2d2 1px, #fff 1px) 4px 0 / 2px 100% no-repeat; }
.sep.narrow { width: 6px; background-position: 2px 0; }
.sep:first-of-type, .grip.first + .tool + .sep { width: 7px; }
.tool { width: 33px; height: 32px; flex: none; display: flex; align-items: center; justify-content: center; padding-left: 1px; }
.second .tool { padding-left: 1px; }
.second .grip:not(.first) { width: 17px; }
.second .tool svg { height: 24px; width: 24px; }
.tool svg { width: 23px; height: 23px; }
.tool.on { width: 32px; height: 31px; background: #dcdcdc; border: 1px solid #a8a8a8; border-radius: 3px; padding: 0; }
.tool.raised { width: 32px; height: 31px; background: #fbfbfb; border: 1px solid #b0b0b0; border-radius: 3px; padding: 0; }
.tri { display: inline-block; width: 0; height: 0; border: 4px solid transparent; border-top: 4.5px solid #4a4a4a; border-bottom: 0; }
.tri.up { border: 4px solid transparent; border-bottom: 4.500px solid #4a4a4a; border-top: 0; }
.tri.left { border: 4px solid transparent; border-right: 4.500px solid #4a4a4a; border-left: 0; }
.tri.right { border: 4px solid transparent; border-left: 4.500px solid #4a4a4a; border-right: 0; }
.pagecombo { width: 111px; height: 30px; margin: 0 1px; border: 1px solid #a8a8a8; border-radius: 2px; background: #fff; display: flex; align-items: center; flex: none; }
.pagecombo > span { flex: 1; padding: 2px 0 0 3px; white-space: nowrap; letter-spacing: -0.1px; }
.pagecombo em { width: 20px; height: 100%; border-left: 1px solid #b0b0b0; background: linear-gradient(#fff, #f2f2f2); display: flex; align-items: center; justify-content: center; padding-right: 1px; }
.menuarrow { width: 13px; display: flex; justify-content: center; padding-right: 2px; }

.body { height: 581px; flex: none; display: flex; }
.toolbox { width: 40px; border-right: 1px solid #b5b5b5; background: linear-gradient(90deg, #fafafa, #eee); display: flex; flex-direction: column; align-items: center; flex: none; }
.toolbox b { width: 32px; height: 32.1px; flex: none; display: flex; align-items: center; justify-content: center; border: 1px solid transparent; padding: 0 0 0 2px; }
.toolbox b svg { width: 24px; height: 24px; }
.toolbox b.on { height: 31.1px; margin-top: 1px; background: #dcdcdc; border-color: #a8a8a8; border-radius: 3px; }
.hgrip { width: 18px; height: 12px; flex: none; background: radial-gradient(circle, #b0b0b0 0.7px, transparent 0.9px) 0 0 / 3px 3px; border: solid transparent; border-width: 5px 0 1px; background-clip: padding-box; }
.more { width: 8px; height: 9px; margin-top: 9px; }

.layout { width: 848px; flex: none; display: grid; grid-template: 20px 546px 15px / 19px 815px 14px; }
.ruler-h { grid-area: 1 / 1 / 2 / 4; width: 848px; height: 20px; }
.ruler-v { grid-area: 2 / 1 / 4 / 2; width: 19px; height: 561px; overflow: hidden; border-bottom: 1px solid #b5b5b5; }
.ruler-h text, .ruler-v text { font: 11.500px "DejaVu Sans Condensed", sans-serif; font-stretch: condensed; fill: #444; letter-spacing: -0.7px; }
.view { grid-area: 2 / 2 / 3 / 3; width: 815px; height: 546px; overflow: hidden; }
.land { fill: #f7d1d0; stroke: #736064; stroke-width: .9; stroke-linejoin: round; }
.hole { fill: #fff; stroke: #736064; stroke-width: .9; stroke-linejoin: round; }
.border { fill: none; stroke: #574a4c; stroke-width: .95; stroke-linejoin: round; }
.handle { fill: #fff; stroke: #3d85b3; }
.vbar { grid-area: 2 / 3 / 3 / 4; display: flex; flex-direction: column; border-left: 1px solid #b5b5b5; }
.vbar .btn, .sbar .btn { height: 14px; flex: none; display: flex; align-items: center; justify-content: center; background: #fafafa; padding-right: 1px; }
.vbar .thumb, .sbar .thumb { background: linear-gradient(90deg, #fff, #efefef); border: solid #b5b5b5; border-width: 1px 0; }
.vbar .thumb { flex: 1; }
.groove { background: #e6e6e6; }
.g1 { height: 31px; border-top: 1px solid #b5b5b5; } .g2 { height: 36px; border-bottom: 1px solid #b5b5b5; }
.hbar { grid-area: 3 / 2 / 4 / 3; display: flex; border: solid #b5b5b5; border-width: 1px 0; }
.hbar .btn { width: 14px; display: flex; align-items: center; justify-content: center; background: #fafafa; }
.hbar .thumb { flex: 1; background: linear-gradient(#fff, #f0f0f0); border: solid #b5b5b5; border-width: 0 1px; }
.h1 { width: 18px; border-left: 1px solid #b5b5b5; } .h2 { width: 19px; border-right: 1px solid #b5b5b5; }
.corner { grid-area: 3 / 3 / 4 / 4; background: #f6f6f6; border: 1px solid #b5b5b5; border-right: 0; }

.splitter { width: 6px; flex: none; display: flex; align-items: center; justify-content: center; }
.vdots { width: 3px; height: 18px; background: radial-gradient(circle, #aaa 0.7px, transparent 0.9px) 0 0 / 3px 3px; }
.panel { width: 472px; flex: none; display: flex; flex-direction: column; }
.docktitle { height: 20px; flex: none; display: flex; align-items: center; padding: 1px 2px 0 4px; gap: 3px; }
.docktitle span { flex: 1; font: 12px/16px "Open Sans", sans-serif; font-size: 11.500px; letter-spacing: -0.15px; }
.docktitle .pb { width: 11px; height: 11px; }
.itemname { height: 17px; flex: none; background: #c8c8c8; padding: 3px 5px 0; font-weight: bold; line-height: 13px; font-size: 11px; letter-spacing: 0; }
.itemtools { height: 31px; flex: none; display: flex; align-items: center; padding: 0 0 1px 8px; }
.itemtools svg { width: 16px; height: 16px; }
.itemtools .gap { margin-left: 10px; }
.itemtools i { width: 1px; height: 12px; background: #fff; margin: 0 7.300px; }

.scrollbox { display: flex; flex: none; border: 1px solid #b5b5b5; border-right: 0; overflow: hidden; }
.scrollbox .content { flex: 1; min-width: 0; overflow: hidden; }
.props { height: 368px; }
.props .content { padding: 11px 11px 0 12px; }
.sbar { width: 15px; flex: none; border-left: 1px solid #b5b5b5; border-right: 1px solid #b5b5b5; display: flex; flex-direction: column; }
.sbar .groove { flex: 1; border-bottom: 1px solid #b5b5b5; }
.t1 { height: 112px; } .t2 { height: 28px; }
h3 { margin: 0; height: 18px; font: bold 11px/16px "DejaVu Sans Condensed", sans-serif; font-stretch: condensed; letter-spacing: 0.05px; display: flex; align-items: center; }
.fold { width: 0; height: 0; border: 5.500px solid transparent; border-top: 7px solid #333; border-bottom: 0; margin: 2px 8px 0 2px; }
.group { background: #ececec; border: 1px solid #d8d8d8; border-radius: 2px; padding: 0 17px 0 11px; white-space: nowrap; }
.row { display: flex; align-items: center; }
.row label { width: 68px; flex: none; padding-top: 2px; }
.input { flex: 1; height: 22px; background: #fff; border: 1px solid #a9a9a9; border-radius: 2px; display: flex; align-items: center; padding: 2px 0 0 2px; letter-spacing: -0.2px; }
.spin { height: 21px; padding: 0 0 0 3px; }
.spin > span { flex: 1; padding-top: 2px; }
.spin em { width: 14px; height: 100%; border-left: 1px solid #b5b5b5; display: flex; flex-direction: column; align-items: center; justify-content: center; gap: 3px; }
.combo { height: 26px; flex: 1; border: 1px solid #a9a9a9; border-radius: 2px; background: linear-gradient(#fdfdfd, #ededed); display: flex; align-items: center; padding: 3px 7px 0 3px; }
.combo .tri { margin-left: auto; margin-top: -4px; }
.sqbtn { width: 24px; height: 23px; flex: none; border: 1px solid #b0b0b0; border-radius: 2px; background: #fafafa; display: flex; align-items: center; justify-content: center; }
.sqbtn svg { width: 16px; height: 16px; }
.dd { width: 21px; height: 16px; margin: 0 1px 0 10px; }
.check { width: 14px; height: 14px; flex: none; border: 1px solid #b5b5b5; background: #fff; margin-right: 4px; display: block; }
.check svg { width: 12px; height: 12px; }
.check + span { padding-top: 1px; letter-spacing: -0.25px; }
.check.off { background: #eee; }
.grow { flex: 1; }
.dim { color: #858585; }
.main { height: 142px; padding-top: 14px; margin-bottom: 6px; }
.r-scale { height: 22px; }
.r-rot { height: 21px; margin-top: 11px; }
.r-crs { height: 26px; margin-top: 8px; }
.r-crs .sqbtn { margin-left: 6px; }
.r-draw { margin-top: 8px; height: 14px; }
.main .r-draw, .layers .row { padding-left: 1px; }
.layers { height: 110px; padding-top: 14px; margin-bottom: 6px; }
.theme { flex: none; width: 182px; height: 22px; }
.r-theme { height: 22px; }
.r-lock { height: 24px; margin-top: 9px; }
.r-styles { height: 14px; margin-top: 9px; }
.extents { height: 60px; padding-top: 14px; }
.r-xmin label { width: 36px; }

.hsplit { height: 6px; display: flex; justify-content: center; align-items: center; flex: none; }
.hdots { width: 18px; height: 3px; background: radial-gradient(circle, #aaa 0.7px, transparent 0.9px) 0 0 / 3px 3px; }
.tabs { height: 24px; flex: none; display: flex; align-items: flex-end; border-bottom: 1px solid #b5b5b5; }
.tabs span { height: 21px; border: 1px solid #b8b8b8; border-bottom: 0; border-left: 0; background: #dedede; text-align: center; padding-top: 5px; }
.tabs .active { height: 25px; width: 48px; margin-bottom: -1px; background: #f4f4f4; border-left: 1px solid #b8b8b8; border-radius: 2px 2px 0 0; padding-top: 6px; }
.tabs .t-items { width: 52px; } .tabs .t-undo { width: 85px; padding-right: 2px; }
.docktitle.atlas { height: 20px; padding-top: 1px; }
.generate { height: 24px; flex: none; border: 1px solid #b5b5b5; border-bottom: 0; display: flex; align-items: center; padding: 0 0 3px 12px; }
.generate .check + span { letter-spacing: -0.12px; }
.config { height: 71px; }
.config .content { padding: 9px 10px 0 11px; }
.cover { height: 60px; padding: 10px 11px 0 9px; }
.cover label { width: 81px; letter-spacing: -0.1px; }
.cover .combo { height: 24px; padding-top: 1px; }
.cover .combo .tri { margin-top: -1px; }
.poly { width: 16px; height: 13px; margin-right: 4px; margin-top: -3px; }

.status { height: 27px; flex: none; display: flex; align-items: center; padding-left: 832px; white-space: nowrap; padding-top: 1px; letter-spacing: -0.22px; }
.s-x { width: 106px; padding-top: 2px; } .s-y { width: 106px; padding-top: 2px; } .s-p { width: 106px; padding-top: 2px; }
.zoom { width: 108px; height: 22px; }
.zoom > span { padding-left: 2px; }
.slider { display: flex; align-items: center; margin-left: 6px; width: 98px; }
.slider .fill { width: 5px; height: 6px; background: #2387d8; border-radius: 2px 0 0 2px; }
.slider .knob { width: 13px; height: 13px; background: #fcfcfc; border: 1px solid #a0a0a0; border-radius: 3px; }
.slider .track { flex: 1; height: 5px; background: #d0d0d0; border: 1px solid #b0b0b0; border-radius: 2px; }
.edge { height: 1px; background: linear-gradient(90deg, #111 48px, #bdbdbd 48px 392px, #22160f 392px); }
.watermark { position: absolute; left: 1073px; top: 650px; color: rgba(120, 120, 120, 0.5); white-space: nowrap; font-family: "Open Sans", sans-serif; font-stretch: normal; }
.watermark p { margin: 0; }
.w1 { font-size: 18px; line-height: 24px; letter-spacing: 0.55px; }
.w2 { font-size: 13.500px; line-height: 22px; letter-spacing: 0.35px; }
```
FILE: rulers.js
```js
// Draws the millimetre rulers along the top and left of the layout view.
const PX_PER_MM = 2.62;

function ticks(origin, from, to, mark) {
  for (let mm = Math.ceil((from - origin) / PX_PER_MM / 2) * 2; ; mm += 2) {
    const pos = Math.floor(origin + mm * PX_PER_MM);
    if (pos > to) break;
    const major = mm >= 0 && mm % 20 === 0;
    mark(mm, pos, major ? 19 : mm % 10 === 0 ? 7 : 4, major);
  }
}

let path = '';
let labels = '';
ticks(77.5, 61, 886, (mm, x, len, major) => {
  path += `M${x + 0.5} ${140 - len}V140`;
  if (major) labels += `<text x="${x + 1}" y="132">${mm}</text>`;
});
document.getElementById('rulerH').innerHTML =
  `<path d="${path}" stroke="#444"/>${labels}<path d="M660.500 121V140" stroke="#f00"/>`;

path = '';
labels = '';
ticks(141.3, 140, 697, (mm, y, len, major) => {
  path += `M${59 - len} ${y + 0.5}H59`;
  if (major) labels += `<text transform="translate(51 ${y + 3}) rotate(-90)" text-anchor="end">${mm}</text>`;
});
document.getElementById('rulerV').innerHTML =
  `<path d="${path}" stroke="#444"/>${labels}<path d="M40 384.500H59" stroke="#f00"/>`;
```
